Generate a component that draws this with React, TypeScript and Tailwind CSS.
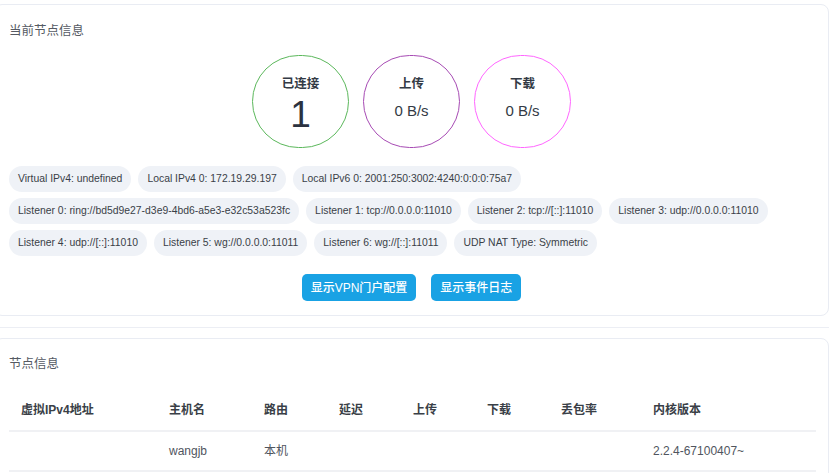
import React from "react";

const chipsRows = [
  ["Virtual IPv4: undefined", "Local IPv4 0: 172.19.29.197", "Local IPv6 0: 2001:250:3002:4240:0:0:0:75a7"],
  [
    "Listener 0: ring://bd5d9e27-d3e9-4bd6-a5e3-e32c53a523fc",
    "Listener 1: tcp://0.0.0.0:11010",
    "Listener 2: tcp://[::]:11010",
    "Listener 3: udp://0.0.0.0:11010",
  ],
  [
    "Listener 4: udp://[::]:11010",
    "Listener 5: wg://0.0.0.0:11011",
    "Listener 6: wg://[::]:11011",
    "UDP NAT Type: Symmetric",
  ],
];

const headers = ["虚拟IPv4地址", "主机名", "路由", "延迟", "上传", "下载", "丢包率", "内核版本"];
const row = ["", "wangjb", "本机", "", "", "", "", "2.2.4-67100407~"];

export default function App() {
  return (
    <div
      className="w-[831px] h-[473px] overflow-hidden bg-white pt-[4px]"
      style={{ fontFamily: '"Liberation Sans", "Noto Sans CJK SC", Arial, sans-serif' }}
    >
      <div className="ml-[-6px] mr-[2px]">
        {/* Card 1 */}
        <div className="h-[312px] border border-[#e9ecf3] rounded-[8px] px-[14px] pt-[17px]">
          <div className="text-[12.5px] text-[#555a63] leading-[18px]">当前节点信息</div>
          <div className="flex justify-center gap-[14px] mt-[15px]">
            <div className="w-[97px] h-[93px] rounded-full border border-[#5cb85c] flex flex-col items-center pt-[20px]">
              <div className="text-[12.5px] font-bold text-[#333a45] leading-[16px]">已连接</div>
              <div className="text-[37px] text-[#2b3240] leading-[40px] mt-[3px]">1</div>
            </div>
            <div className="w-[97px] h-[93px] rounded-full border border-[#a74bb4] flex flex-col items-center pt-[20px]">
              <div className="text-[12.5px] font-bold text-[#333a45] leading-[16px]">上传</div>
              <div className="text-[15px] text-[#333a45] leading-[20px] mt-[9px]">0 B/s</div>
            </div>
            <div className="w-[97px] h-[93px] rounded-full border border-[#ff66ff] flex flex-col items-center pt-[20px]">
              <div className="text-[12.5px] font-bold text-[#333a45] leading-[16px]">下载</div>
              <div className="text-[15px] text-[#333a45] leading-[20px] mt-[9px]">0 B/s</div>
            </div>
          </div>
          <div className="flex flex-col gap-[6px] mt-[18px]">
            {chipsRows.map((r, i) => (
              <div key={i} className="flex gap-[7px]">
                {r.map((c) => (
                  <div
                    key={c}
                    className="h-[26px] px-[9px] rounded-full bg-[#eff2f7] text-[10.4px] text-[#3a3f47] flex items-center whitespace-nowrap"
                  >
                    {c}
                  </div>
                ))}
              </div>
            ))}
          </div>
          <div className="flex justify-center gap-[15px] mt-[18px]">
            <button className="h-[27px] px-[9px] rounded-[5px] bg-[#19a2e4] text-white text-[12px] font-medium">
              显示VPN门户配置
            </button>
            <button className="h-[27px] px-[9px] rounded-[5px] bg-[#19a2e4] text-white text-[12px] font-medium">
              显示事件日志
            </button>
          </div>
        </div>

        {/* divider */}
        <div className="mt-[11px] h-px bg-[#eceef4]" />

        {/* Card 2 */}
        <div className="mt-[10px] border border-[#e9ecf3] rounded-t-[8px] pl-[14px] pr-[12px] pt-[16px] h-[200px]">
          <div className="text-[12.5px] text-[#555a63] leading-[18px]">节点信息</div>
          <div className="mt-[17px]">
            <div className="grid grid-cols-[148px_95px_75px_74px_74px_74px_92px_1fr] h-[42px] items-center border-b-2 border-[#f0f1f4]">
              {headers.map((h) => (
                <div key={h} className="pl-[12px] text-[12px] font-bold text-[#3a3f47] whitespace-nowrap">
                  {h}
                </div>
              ))}
            </div>
            <div className="grid grid-cols-[148px_95px_75px_74px_74px_74px_92px_1fr] h-[40px] items-center border-b-2 border-[#f0f1f4]">
              {row.map((c, i) => (
                <div key={i} className="pl-[12px] text-[12px] text-[#50555e] whitespace-nowrap">
                  {c}
                </div>
              ))}
            </div>
          </div>
        </div>
      </div>
    </div>
  );
}
